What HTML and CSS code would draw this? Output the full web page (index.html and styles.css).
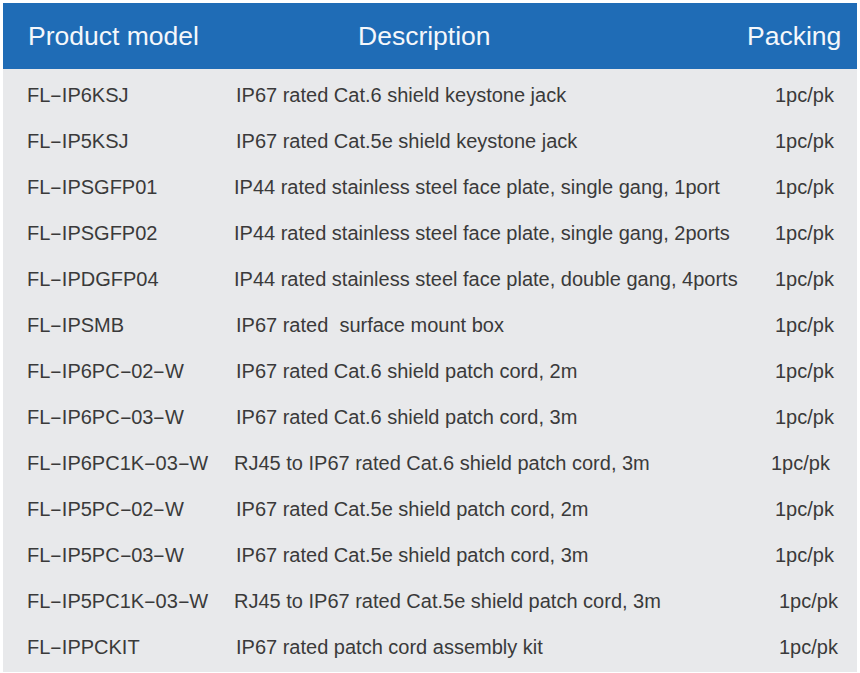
FILE: index.html
```html
<!DOCTYPE html>
<html>
<head>
<meta charset="utf-8">
<link rel="stylesheet" href="styles.css">
</head>
<body>
<div class="sheet">
  <div class="head">
    <div class="h-model">Product model</div>
    <div class="h-desc">Description</div>
    <div class="h-pack">Packing</div>
  </div>
  <div class="body">
    <div class="row"><span class="model">FL<span class="dash">-</span>IP6KSJ</span><span class="desc">IP67 rated Cat.6 shield keystone jack</span><span class="pack">1pc/pk</span></div>
    <div class="row"><span class="model">FL<span class="dash">-</span>IP5KSJ</span><span class="desc">IP67 rated Cat.5e shield keystone jack</span><span class="pack">1pc/pk</span></div>
    <div class="row"><span class="model">FL<span class="dash">-</span>IPSGFP01</span><span class="desc shift-l">IP44 rated stainless steel face plate, single gang, 1port</span><span class="pack">1pc/pk</span></div>
    <div class="row"><span class="model">FL<span class="dash">-</span>IPSGFP02</span><span class="desc shift-l">IP44 rated stainless steel face plate, single gang, 2ports</span><span class="pack">1pc/pk</span></div>
    <div class="row"><span class="model">FL<span class="dash">-</span>IPDGFP04</span><span class="desc shift-l">IP44 rated stainless steel face plate, double gang, 4ports</span><span class="pack">1pc/pk</span></div>
    <div class="row"><span class="model">FL<span class="dash">-</span>IPSMB</span><span class="desc">IP67 rated&nbsp; surface mount box</span><span class="pack">1pc/pk</span></div>
    <div class="row"><span class="model">FL<span class="dash">-</span>IP6PC<span class="dash">-</span>02<span class="dash">-</span>W</span><span class="desc">IP67 rated Cat.6 shield patch cord, 2m</span><span class="pack">1pc/pk</span></div>
    <div class="row"><span class="model">FL<span class="dash">-</span>IP6PC<span class="dash">-</span>03<span class="dash">-</span>W</span><span class="desc">IP67 rated Cat.6 shield patch cord, 3m</span><span class="pack">1pc/pk</span></div>
    <div class="row"><span class="model">FL<span class="dash">-</span>IP6PC1K<span class="dash">-</span>03<span class="dash">-</span>W</span><span class="desc shift-l">RJ45 to IP67 rated Cat.6 shield patch cord, 3m</span><span class="pack pack-l">1pc/pk</span></div>
    <div class="row"><span class="model">FL<span class="dash">-</span>IP5PC<span class="dash">-</span>02<span class="dash">-</span>W</span><span class="desc">IP67 rated Cat.5e shield patch cord, 2m</span><span class="pack">1pc/pk</span></div>
    <div class="row"><span class="model">FL<span class="dash">-</span>IP5PC<span class="dash">-</span>03<span class="dash">-</span>W</span><span class="desc">IP67 rated Cat.5e shield patch cord, 3m</span><span class="pack">1pc/pk</span></div>
    <div class="row"><span class="model">FL<span class="dash">-</span>IP5PC1K<span class="dash">-</span>03<span class="dash">-</span>W</span><span class="desc shift-l">RJ45 to IP67 rated Cat.5e shield patch cord, 3m</span><span class="pack pack-r">1pc/pk</span></div>
    <div class="row"><span class="model">FL<span class="dash">-</span>IPPCKIT</span><span class="desc">IP67 rated patch cord assembly kit</span><span class="pack pack-r">1pc/pk</span></div>
  </div>
</div>
</body>
</html>
```
FILE: styles.css
```css
html, body {
  margin: 0;
  padding: 0;
  background: #ffffff;
}
body {
  font-family: "Liberation Sans", Arial, sans-serif;
}
.sheet {
  margin: 3px 0 0 3px;
  width: 854px;
}
.head {
  height: 66px;
  background: #1f6cb6;
  color: #f4f7fb;
  font-size: 26.5px;
  display: flex;
  align-items: center;
  box-sizing: border-box;
}
.h-model {
  padding-left: 25px;
  width: 330px;
}
.h-desc {
  width: 389px;
}
.h-pack {
  flex: 1;
}
.body {
  background: #e8e9eb;
  padding-top: 3px;
  padding-bottom: 2px;
  color: #3a3a3a;
  font-size: 20px;
}
.row {
  height: 46px;
  display: grid;
  grid-template-columns: 233px 539px 1fr;
  align-items: center;
}
.model {
  padding-left: 24px;
}
.dash {
  display: inline-block;
  width: 11.5px;
  text-align: center;
  transform: scaleX(1.9);
}
.desc.shift-l {
  margin-left: -2px;
}
.pack-l {
  margin-left: -4px;
}
.pack-r {
  margin-left: 4px;
}
```
